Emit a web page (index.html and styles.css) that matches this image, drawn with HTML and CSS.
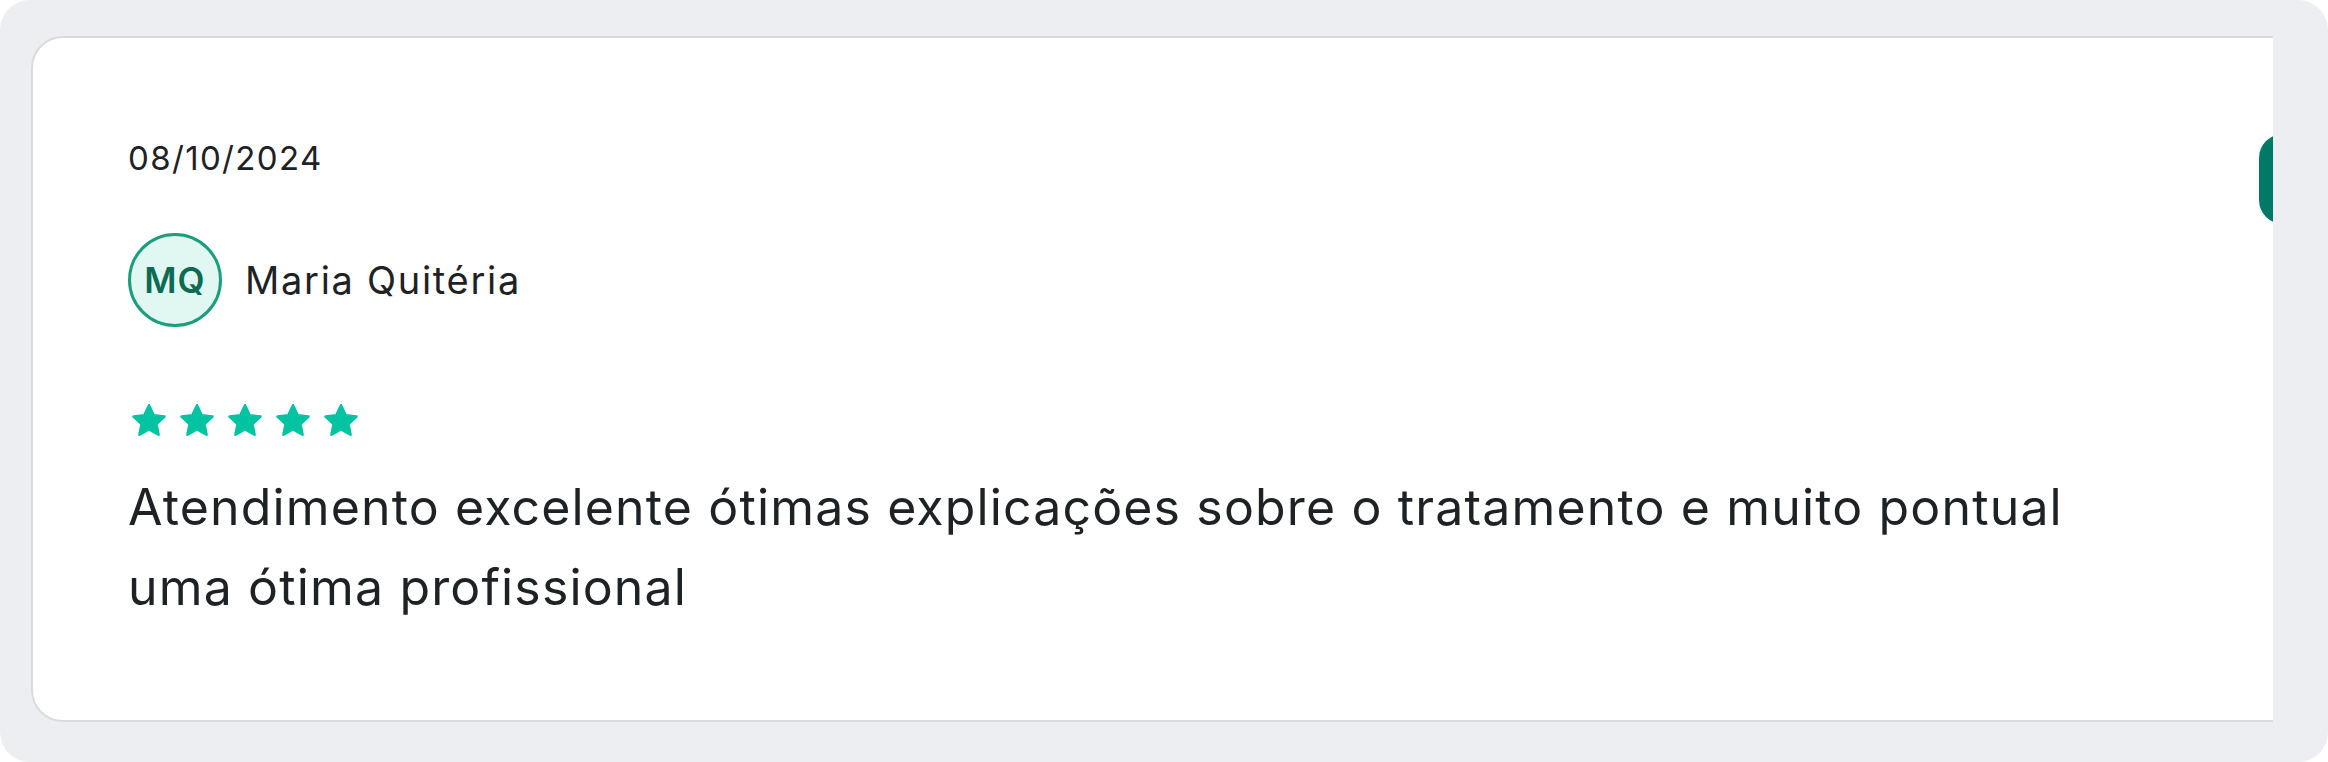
FILE: index.html
```html
<!DOCTYPE html>
<html lang="pt-BR">
<head>
<meta charset="utf-8">
<title>Avaliação</title>
<link rel="stylesheet" href="styles.css">
</head>
<body>
<div class="frame">
  <div class="viewport">
    <article class="card">
      <div class="date">08/10/2024</div>
      <div class="author">
        <div class="avatar">MQ</div>
        <div class="name">Maria Quitéria</div>
      </div>
      <div class="stars">
        <svg class="star" viewBox="1.75 1.75 20.5 19.6" width="34" height="32"><path d="M12 2.5l2.9 6.1 6.6.8-4.9 4.6 1.3 6.6L12 17.3l-5.9 3.3 1.3-6.6-4.9-4.6 6.6-.8z"/></svg>
        <svg class="star" viewBox="1.75 1.75 20.5 19.6" width="34" height="32"><path d="M12 2.5l2.9 6.1 6.6.8-4.9 4.6 1.3 6.6L12 17.3l-5.9 3.3 1.3-6.6-4.9-4.6 6.6-.8z"/></svg>
        <svg class="star" viewBox="1.75 1.75 20.5 19.6" width="34" height="32"><path d="M12 2.5l2.9 6.1 6.6.8-4.9 4.6 1.3 6.6L12 17.3l-5.9 3.3 1.3-6.6-4.9-4.6 6.6-.8z"/></svg>
        <svg class="star" viewBox="1.75 1.75 20.5 19.6" width="34" height="32"><path d="M12 2.5l2.9 6.1 6.6.8-4.9 4.6 1.3 6.6L12 17.3l-5.9 3.3 1.3-6.6-4.9-4.6 6.6-.8z"/></svg>
        <svg class="star" viewBox="1.75 1.75 20.5 19.6" width="34" height="32"><path d="M12 2.5l2.9 6.1 6.6.8-4.9 4.6 1.3 6.6L12 17.3l-5.9 3.3 1.3-6.6-4.9-4.6 6.6-.8z"/></svg>
      </div>
      <p class="text">Atendimento excelente ótimas explicações sobre o tratamento e muito pontual uma ótima profissional</p>
    </article>
    <button class="next" aria-label="Próximo"></button>
  </div>
</div>
</body>
</html>
```
FILE: styles.css
```css
html, body {
  margin: 0;
  padding: 0;
  background: #ffffff;
}
body {
  font-family: Inter, "Noto Sans", sans-serif;
  color: #1f2224;
}
.frame {
  box-sizing: border-box;
  width: 2328px;
  height: 762px;
  background: #edeef1;
  border-radius: 30px;
  padding: 36px 55px 40px 31px;
}
.viewport {
  position: relative;
  height: 686px;
  overflow: hidden;
}
.card {
  box-sizing: border-box;
  width: 2400px;
  height: 686px;
  background: #ffffff;
  border: 2px solid #d8dadb;
  border-radius: 32px;
  padding: 100px 0 0 95px;
  display: flex;
  flex-direction: column;
}
.date {
  font-size: 33px;
  line-height: 40px;
  letter-spacing: 1.35px;
}
.author {
  display: flex;
  align-items: center;
  gap: 23px;
  margin-top: 55px;
}
.avatar {
  box-sizing: border-box;
  width: 94px;
  height: 94px;
  border-radius: 50%;
  border: 3px solid #1a9e7e;
  background: #e1f7f1;
  color: #0d6b55;
  font-weight: 600;
  font-size: 35px;
  letter-spacing: 1px;
  display: flex;
  align-items: center;
  justify-content: center;
}
.name {
  font-size: 38px;
  line-height: 44px;
  letter-spacing: 1.7px;
}
.stars {
  display: flex;
  gap: 14px;
  margin-top: 77px;
  margin-left: 4px;
}
.star path {
  fill: #00c4a1;
  stroke: #00c4a1;
  stroke-width: 1.5;
  stroke-linejoin: round;
}
.text {
  margin: 31px 0 0;
  width: 2010px;
  font-size: 50px;
  line-height: 80px;
  letter-spacing: 1.15px;
}
.next {
  position: absolute;
  top: 98px;
  left: calc(100% - 14px);
  width: 90px;
  height: 90px;
  border: none;
  border-radius: 24px;
  background: #007a66;
  padding: 0;
}
```
